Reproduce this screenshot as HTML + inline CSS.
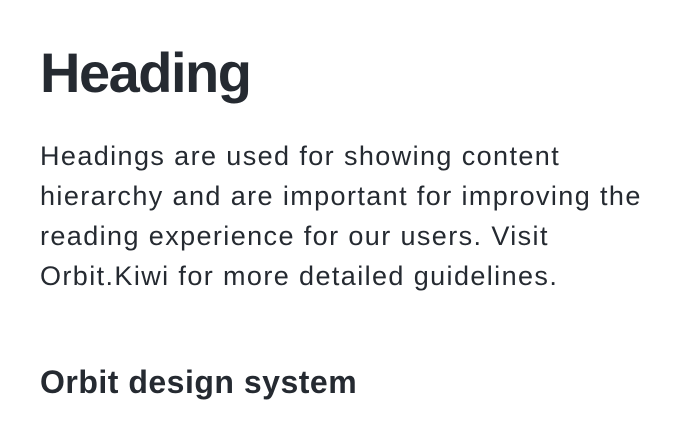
<!DOCTYPE html>
<html><head><meta charset="utf-8"><style>
html,body{margin:0;padding:0;background:#fff;width:686px;height:448px;overflow:hidden}
div{position:absolute;left:40px;color:#252a31;font-family:"Liberation Sans",sans-serif;white-space:nowrap}
.h{top:45px;font-size:56px;line-height:56px;font-weight:bold;letter-spacing:-1.5px}
.p{top:136px;font-size:27px;line-height:40px;letter-spacing:1.4px}
.s{top:366px;font-size:32px;line-height:32px;font-weight:bold;letter-spacing:0.5px}
</style></head><body>
<div class="h">Heading</div>
<div class="p">Headings are used for showing content<br>hierarchy and are important for improving the<br>reading experience for our users. Visit<br>Orbit.Kiwi for more detailed guidelines.</div>
<div class="s">Orbit design system</div>
</body></html>
